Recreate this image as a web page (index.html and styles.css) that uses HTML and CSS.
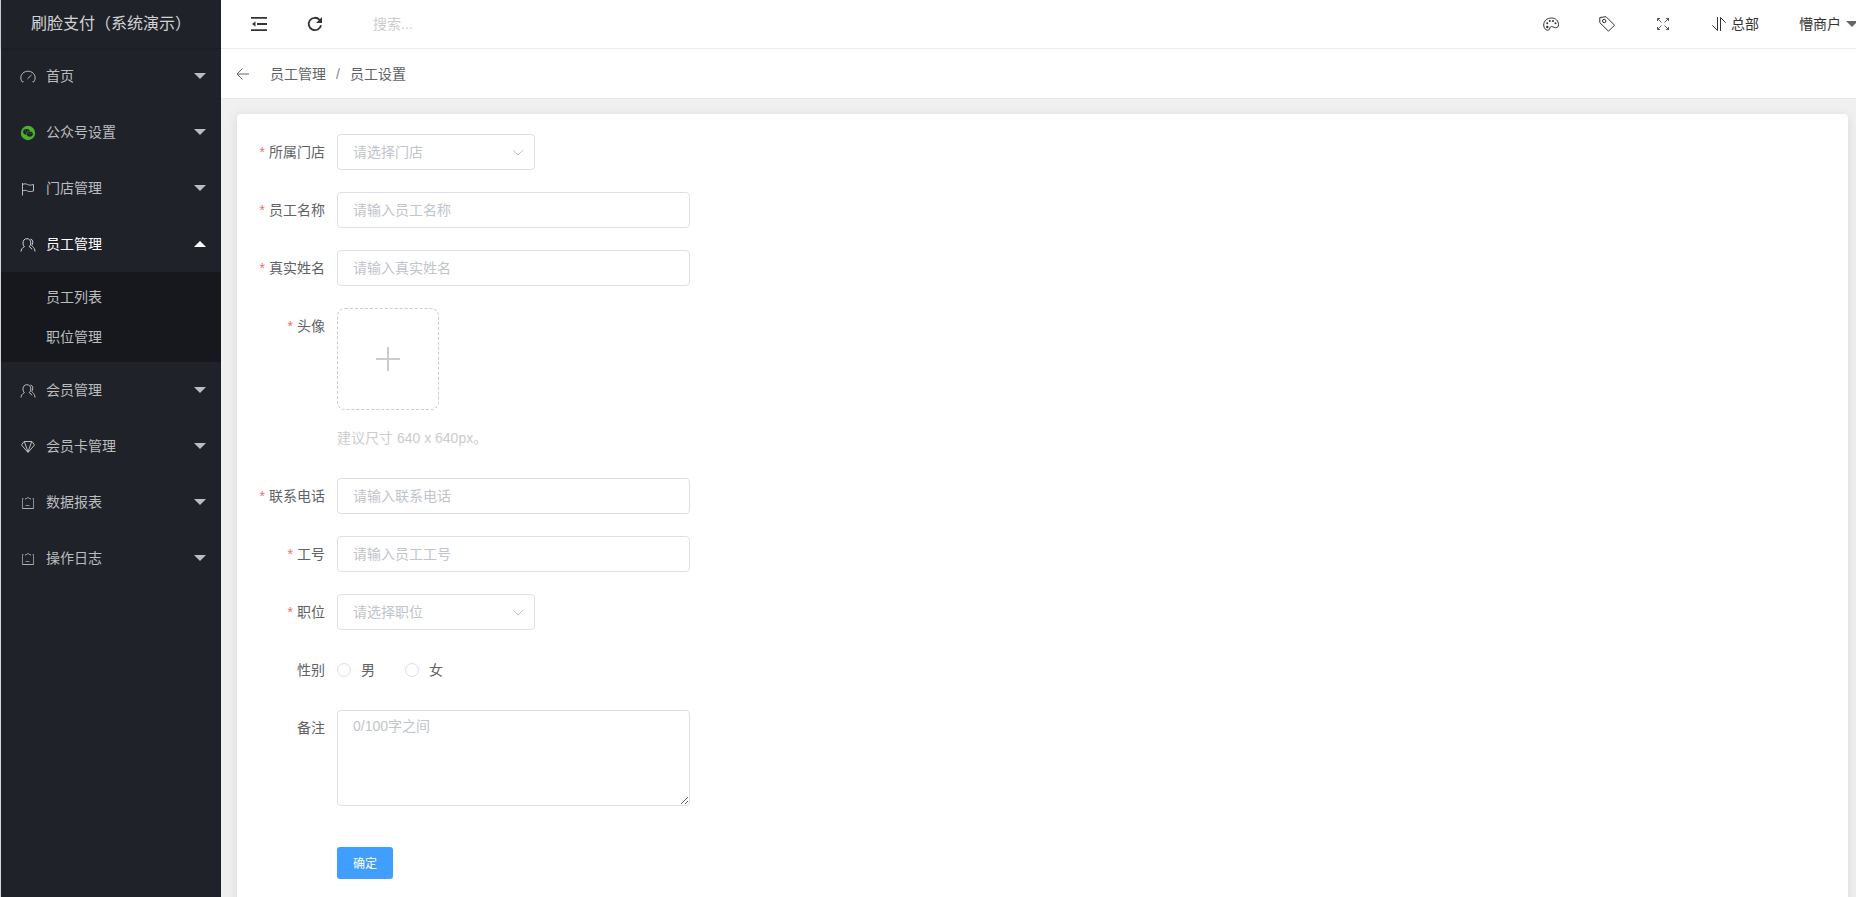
FILE: index.html
```html
<!DOCTYPE html>
<html lang="zh-CN">
<head>
    <meta charset="UTF-8">
    <meta name="viewport" content="width=device-width, initial-scale=1.0">
    <title>员工设置</title>
    <link rel="stylesheet" href="styles.css">
</head>
<body>
    <svg class="icon-defs" width="0" height="0">
        <symbol id="icon-user" viewBox="0 0 16 16">
            <path d="M1 14.500c.2-2.200 1.300-3.800 3.400-4.800C3.400 8.800 3 7.500 3 6c0-2.700 1.600-4.300 3.900-4.300S10.800 3.300 10.800 6c0 1.500-.6 2.800-1.600 3.700 1.400.6 2.200 1.500 2.700 2.600M10.500 2c2.300.3 3 3.500 1.600 5.800-.5.7-.3 1.200.5 1.800 1.400 1 2.200 2.500 2.400 4.900"/>
        </symbol>
        <symbol id="icon-form" viewBox="0 0 16 16">
            <path d="M3.500 3.500h-1v10h11v-10h-1M5.500 4.500v-1h1.300c0-1.300 2.400-1.300 2.400 0h1.300v1"/>
            <path class="line" d="M2.500 13.500h11M5.500 10.500h4"/>
        </symbol>
    </svg>

    <div class="layout">
        <div class="sidebar">
            <div class="logo">刷脸支付（系统演示）</div>
            <ul class="nav">
                <li>
                    <a class="nav-item" href="#">
                        <svg class="icon" viewBox="0 0 16 16"><path d="M2 12.700C0 9.300 .8 6 2.800 4.200c3-2.700 7.500-2.600 10.400 0 2 1.900 2.700 5.100.8 8.500h-1.500M2 12.700h1.500M7.500 9.800l4-3.800"/></svg>
                        <span>首页</span><i class="caret"></i>
                    </a>
                </li>
                <li>
                    <a class="nav-item" href="#">
                        <svg class="icon wechat" viewBox="0 0 16 16">
                            <circle class="disc" cx="8" cy="8" r="7.200"/>
                            <ellipse class="bubble" cx="6.600" cy="6.800" rx="3.500" ry="2.900"/>
                            <ellipse class="bubble front" cx="9.800" cy="9.100" rx="3.400" ry="2.800"/>
                            <path class="eyes" d="M5 6h.7M7.500 6h.7M8.500 8.500h.6M10.600 8.500h.6"/>
                        </svg>
                        <span>公众号设置</span><i class="caret"></i>
                    </a>
                </li>
                <li>
                    <a class="nav-item" href="#">
                        <svg class="icon" viewBox="0 0 16 16"><path d="M2.500 2v12.500M2.500 3.500c2-1 3.500-.8 5 0s3.500.8 6 0v6.500c-2.500.8-4.500.8-6 0s-3-1-5 0"/></svg>
                        <span>门店管理</span><i class="caret"></i>
                    </a>
                </li>
                <li>
                    <a class="nav-item active" href="#">
                        <svg class="icon"><use href="#icon-user"/></svg>
                        <span>员工管理</span><i class="caret up"></i>
                    </a>
                    <div class="sub-nav">
                        <a href="#">员工列表</a>
                        <a href="#">职位管理</a>
                    </div>
                </li>
                <li>
                    <a class="nav-item" href="#">
                        <svg class="icon"><use href="#icon-user"/></svg>
                        <span>会员管理</span><i class="caret"></i>
                    </a>
                </li>
                <li>
                    <a class="nav-item" href="#">
                        <svg class="icon" viewBox="0 0 16 16"><path d="M4 2.500h8L14.500 6 8 13.500 1.500 6zM4.500 3L8 13l3.500-10"/></svg>
                        <span>会员卡管理</span><i class="caret"></i>
                    </a>
                </li>
                <li>
                    <a class="nav-item" href="#">
                        <svg class="icon form-icon"><use href="#icon-form"/></svg>
                        <span>数据报表</span><i class="caret"></i>
                    </a>
                </li>
                <li>
                    <a class="nav-item" href="#">
                        <svg class="icon form-icon"><use href="#icon-form"/></svg>
                        <span>操作日志</span><i class="caret"></i>
                    </a>
                </li>
            </ul>
        </div>

        <div class="main">
            <div class="header">
                <a class="tool" href="#"><svg class="icon bold" viewBox="0 0 16 16"><path d="M0 1.800h16M6 8h10M0 14.200h16"/><path class="solid" d="M4.500 5.500v5L1 8z"/></svg></a>
                <a class="tool" href="#"><svg class="icon bold" viewBox="0 0 16 16"><path d="M14 9.200a6.200 6.200 0 1 1-1.400-5.300"/><path class="solid" d="M15 1v6H9z"/></svg></a>
                <input class="search" type="text" placeholder="搜索...">
                <div class="header-right">
                    <a class="tool" href="#">
                        <svg class="icon" viewBox="0 0 16 16">
                            <path d="M8.500 2C4 2 .7 5 .7 9c0 3 1.800 5.200 4 5.200 2.300 0 1.600-2 2.600-3.200 1.500-1.700 3.200.8 5.400.8 1.700 0 2.800-1 2.800-3C15.500 4.600 12.500 2 8.500 2z"/>
                            <g class="dots"><circle cx="4.200" cy="7.300" r="1"/><circle cx="6.800" cy="4.900" r="1"/><circle cx="10" cy="4.900" r="1"/><circle cx="12.500" cy="7.300" r="1"/><circle cx="4.300" cy="11" r="1.200"/></g>
                        </svg>
                    </a>
                    <a class="tool" href="#"><svg class="icon" viewBox="0 0 16 16"><path d="M.8 1.500L7 .7l8.500 8.500-6 6L.8 6.700z"/><circle cx="5.200" cy="5" r="1.700"/></svg></a>
                    <a class="tool" href="#"><svg class="icon thin" viewBox="0 0 16 16"><path d="M2.500 5V2.500H5M2.500 2.500l4 4M11 2.500h2.500V5M13.500 2.500l-4 4M2.500 11v2.500H5M2.500 13.500l4-4M11 13.500h2.500V11M13.500 13.500l-4-4"/></svg></a>
                    <a class="tool branch" href="#"><svg class="icon" viewBox="0 0 16 16"><path d="M6.500 1v13.500L1.300 9.300M9.500 15V1.500l5.200 5.200"/></svg>总部</a>
                    <a class="tool account" href="#">懵商户<i class="caret"></i></a>
                </div>
            </div>

            <div class="breadcrumb">
                <svg class="back" viewBox="0 0 14 14"><path d="M13 7H1M6.500 1.500L1 7l5.500 5.500"/></svg>
                <span>员工管理</span>
                <span class="slash">/</span>
                <span>员工设置</span>
            </div>

            <div class="content">
                <form class="card">
                    <div class="form-item">
                        <label class="required">所属门店</label>
                        <div class="select">请选择门店<svg viewBox="0 0 12 7"><path d="M1 1l5 5 5-5"/></svg></div>
                    </div>
                    <div class="form-item">
                        <label class="required">员工名称</label>
                        <input class="input" type="text" placeholder="请输入员工名称">
                    </div>
                    <div class="form-item">
                        <label class="required">真实姓名</label>
                        <input class="input" type="text" placeholder="请输入真实姓名">
                    </div>
                    <div class="form-item">
                        <label class="required">头像</label>
                        <div class="avatar">
                            <div class="upload"><svg viewBox="0 0 24 24"><path d="M12 0v24M0 12h24"/></svg></div>
                            <div class="hint">建议尺寸 640 x 640px。</div>
                        </div>
                    </div>
                    <div class="form-item">
                        <label class="required">联系电话</label>
                        <input class="input" type="text" placeholder="请输入联系电话">
                    </div>
                    <div class="form-item">
                        <label class="required">工号</label>
                        <input class="input" type="text" placeholder="请输入员工工号">
                    </div>
                    <div class="form-item">
                        <label class="required">职位</label>
                        <div class="select">请选择职位<svg viewBox="0 0 12 7"><path d="M1 1l5 5 5-5"/></svg></div>
                    </div>
                    <div class="form-item">
                        <label>性别</label>
                        <div class="radios">
                            <span class="radio"><i></i>男</span>
                            <span class="radio"><i></i>女</span>
                        </div>
                    </div>
                    <div class="form-item">
                        <label>备注</label>
                        <textarea class="textarea" placeholder="0/100字之间"></textarea>
                    </div>
                    <div class="form-item submit">
                        <button class="btn" type="button">确定</button>
                    </div>
                </form>
            </div>
        </div>
    </div>
</body>
</html>
```
FILE: styles.css
```css
* { box-sizing: border-box; }
body { margin: 0; height: 100vh; overflow: hidden; background: #f0f0f0; color: #606266; font: 14px/20px "Liberation Sans", "Noto Sans CJK SC", sans-serif; }
a { color: inherit; text-decoration: none; }
input, textarea, button { font-family: inherit; outline: none; }
.icon-defs { display: none; }
.icon { width: 16px; height: 16px; fill: none; stroke: currentColor; stroke-width: 1; flex: none; }
.icon.bold { stroke-width: 1.8; }
.icon.thin { stroke-width: 0.8; }
.icon .solid { fill: currentColor; stroke: none; }
.icon .dots { fill: currentColor; stroke: none; }
.caret { width: 0; height: 0; border: 6px solid transparent; border-top-color: currentColor; border-bottom: 0; }
.caret.up { border-top: 0; border-bottom: 6px solid currentColor; }

.layout { display: flex; height: 100%; border-left: 1px solid #d3d5d7; }

/* sidebar */
.sidebar { width: 220px; flex: none; background: #20222a; color: #bcbdbf; }
.logo { height: 48px; line-height: 48px; text-align: center; font-size: 16px; color: #d2d3d4; box-shadow: 0 1px 2px rgba(0, 0, 0, 0.15); }
.nav { margin: 0; padding: 0; list-style: none; }
.nav-item { display: flex; align-items: center; height: 56px; padding: 0 15px 0 19px; }
.nav-item span { flex: 1; margin-left: 10px; }
.nav-item.active { color: #fff; }
.nav-item.active .icon { color: #d2d3d4; }
.nav-item .icon { margin-top: 2px; }
.nav-item .form-icon { stroke-width: 0.7; }
.sub-nav { padding: 5px 0; background: #17181d; }
.sub-nav a { display: block; height: 40px; line-height: 40px; padding-left: 45px; }
.wechat .disc { fill: #4cb22a; stroke: none; }
.wechat .bubble { fill: #20222a; stroke: none; }
.wechat .front { stroke: #4cb22a; stroke-width: 0.5; }
.wechat .eyes { stroke: #4cb22a; stroke-width: 0.7; }

/* top bar */
.main { flex: 1; min-width: 0; display: flex; flex-direction: column; }
.header { display: flex; align-items: center; height: 49px; padding: 0 0 0 10px; background: #fff; border-bottom: 1px solid #ebebeb; color: #333; flex: none; }
.tool { display: flex; align-items: center; padding: 0 20px; }
.search { width: 200px; margin-left: 20px; padding: 0 10px; border: 0; font-size: 14px; }
.search::placeholder { color: #ccc; }
.header-right { display: flex; margin-left: auto; margin-right: -2px; height: 20px; }
.branch { gap: 4px; }
.account { padding-right: 0; gap: 5px; }
.account .caret { color: #666; }

.breadcrumb { display: flex; align-items: center; height: 50px; margin-bottom: -1px; padding: 0 15px; background: #fff; border-bottom: 1px solid #e8e8e8; flex: none; }
.back { width: 14px; height: 14px; margin-right: 20px; fill: none; stroke: #666; }
.slash { margin: 0 10px; color: #888; }

/* form */
.content { flex: 1; padding: 16px 8px 0 16px; overflow: hidden; }
.card { height: 900px; padding: 20px 0 0 20px; background: #fff; border-radius: 4px 4px 0 0; box-shadow: 0 2px 12px rgba(0, 0, 0, 0.1); }
.form-item { display: flex; align-items: flex-start; margin-bottom: 22px; }
.form-item label { width: 80px; padding-right: 12px; text-align: right; line-height: 36px; flex: none; white-space: nowrap; }
.form-item label.required::before { content: "*"; margin-right: 4px; color: #f56c6c; }
.input, .select, .textarea { border: 1px solid #dcdfe6; border-radius: 4px; background: #fff; color: #606266; font-size: 14px; }
.input { width: 353px; height: 36px; padding: 0 15px; }
.input::placeholder, .textarea::placeholder { color: #c0c4cc; }
.select { display: flex; align-items: center; justify-content: space-between; width: 198px; height: 36px; padding: 0 10px 0 15px; color: #c0c4cc; }
.select svg { width: 12px; height: 7px; fill: none; stroke: #c0c4cc; }
.upload { display: flex; align-items: center; justify-content: center; width: 102px; height: 102px; border: 1px dashed #ccc; border-radius: 8px; }
.upload svg { width: 24px; height: 24px; stroke: #ccc; stroke-width: 2; }
.hint { height: 46px; padding-top: 18px; color: #ccc; }
.radios { display: flex; align-items: center; height: 36px; gap: 30px; }
.radio { display: flex; align-items: center; gap: 10px; }
.radio i { width: 14px; height: 14px; border: 1px solid #dcdfe6; border-radius: 50%; }
.textarea { display: block; width: 353px; height: 96px; padding: 5px 15px; line-height: 21px; resize: vertical; }
.submit { padding: 19px 0 0 80px; }
.btn { width: 56px; height: 32px; padding: 0 0 2px; border: 0; border-radius: 3px; background: #409eff; color: #fff; font-size: 12px; }
```
